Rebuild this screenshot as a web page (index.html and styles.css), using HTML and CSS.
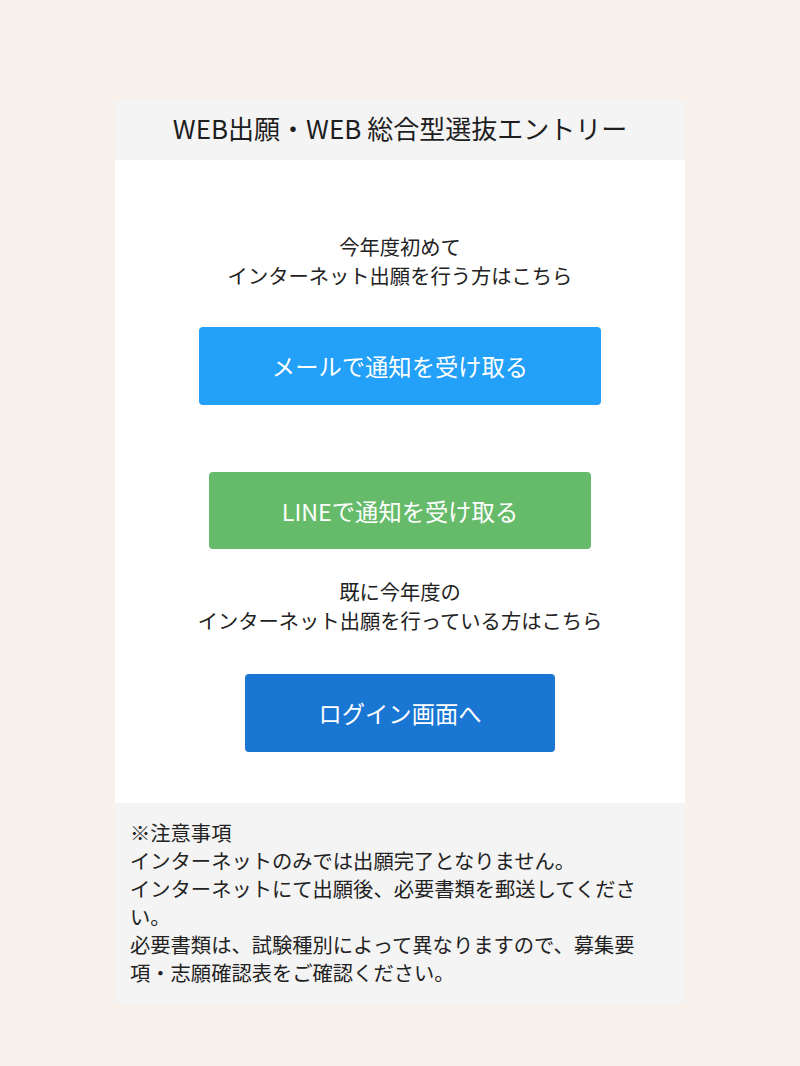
FILE: index.html
```html
<!DOCTYPE html>
<html lang="ja">
<head>
<meta charset="utf-8">
<link rel="stylesheet" href="styles.css">
</head>
<body>
<div class="page">
  <div class="card">
    <div class="header">WEB出願・WEB 総合型選抜エントリー</div>
    <div class="main">
      <p class="lead lead-first">今年度初めて<br>インターネット出願を行う方はこちら</p>
      <a class="btn btn-mail">メールで通知を受け取る</a>
      <a class="btn btn-line">LINEで通知を受け取る</a>
      <p class="lead lead-second">既に今年度の<br>インターネット出願を行っている方はこちら</p>
      <a class="btn btn-login">ログイン画面へ</a>
    </div>
    <div class="note">
      <p>※注意事項<br>インターネットのみでは出願完了となりません。<br>インターネットにて出願後、必要書類を郵送してください。<br>必要書類は、試験種別によって異なりますので、募集要項・志願確認表をご確認ください。</p>
    </div>
  </div>
</div>
</body>
</html>
```
FILE: styles.css
```css
html, body {
  margin: 0;
  padding: 0;
}
body {
  background: #f8f0ea;
  font-family: "Noto Sans CJK JP", "Noto Sans", sans-serif;
  color: #222;
}
.page {
  padding-top: 100px;
  height: 966px;
}
.card {
  width: 570px;
  margin: 0 auto;
}
.header {
  height: 60px;
  line-height: 56px;
  background: #f4f4f4;
  text-align: center;
  font-size: 26px;
  color: #1e1e1e;
}
.main {
  background: #fff;
  height: 643px;
  box-sizing: border-box;
  padding-top: 72px;
  display: flex;
  flex-direction: column;
  align-items: center;
}
.lead {
  margin: 0;
  font-size: 20.3px;
  line-height: 29px;
  text-align: center;
}
.btn {
  display: flex;
  align-items: center;
  justify-content: center;
  height: 78px;
  border-radius: 4px;
  color: #fff;
  font-size: 23.3px;
  text-decoration: none;
}
.btn-mail {
  width: 402px;
  margin-top: 37px;
  background: #23a0f7;
}
.btn-line {
  width: 382px;
  height: 77px;
  margin-top: 67px;
  background: #66bb6a;
}
.lead-second {
  margin-top: 28px;
}
.btn-login {
  width: 310px;
  margin-top: 39px;
  background: #1976d3;
}
.note {
  background: #f4f4f4;
  height: 200px;
  box-sizing: border-box;
  padding: 15px 0 0 15px;
}
.note p {
  margin: 0;
  width: 518px;
  font-size: 20.3px;
  line-height: 28px;
}
```
